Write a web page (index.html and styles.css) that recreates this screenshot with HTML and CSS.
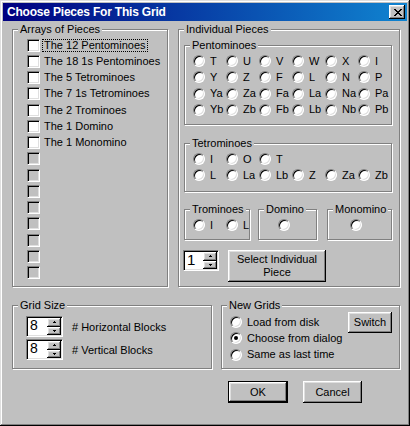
FILE: index.html
```html
<!DOCTYPE html>
<html lang="en">
<head>
  <meta charset="UTF-8" />
  <title>Choose Pieces For This Grid</title>
  <link rel="stylesheet" href="styles.css">
</head>
<body>
  <div class="window">
    <div class="titlebar">
      <span class="title">Choose Pieces For This Grid</span>
      <button class="close-btn" aria-label="Close">
        <svg width="8" height="7" viewBox="0 0 8 7" shape-rendering="crispEdges">
          <path fill="#000" d="M0 0h2v1h-2z M6 0h2v1h-2z M1 1h2v1h-2z M5 1h2v1h-2z M2 2h4v1h-4z M3 3h2v1h-2z M2 4h4v1h-4z M1 5h2v1h-2z M5 5h2v1h-2z M0 6h2v1h-2z M6 6h2v1h-2z"/>
        </svg>
      </button>
    </div>

    <div class="main">
      <div class="top-row">
        <div class="group arrays">
          <span class="group-title">Arrays of Pieces</span>
          <div class="check-row"><span class="checkbox"></span><span class="check-label focus">The 12 Pentominoes</span></div>
          <div class="check-row"><span class="checkbox"></span><span class="check-label">The 18 1s Pentominoes</span></div>
          <div class="check-row"><span class="checkbox"></span><span class="check-label">The 5 Tetrominoes</span></div>
          <div class="check-row"><span class="checkbox"></span><span class="check-label">The 7 1s Tetrominoes</span></div>
          <div class="check-row"><span class="checkbox"></span><span class="check-label">The 2 Trominoes</span></div>
          <div class="check-row"><span class="checkbox"></span><span class="check-label">The 1 Domino</span></div>
          <div class="check-row"><span class="checkbox"></span><span class="check-label">The 1 Monomino</span></div>
          <div class="check-row"><span class="checkbox disabled"></span></div>
          <div class="check-row"><span class="checkbox disabled"></span></div>
          <div class="check-row"><span class="checkbox disabled"></span></div>
          <div class="check-row"><span class="checkbox disabled"></span></div>
          <div class="check-row"><span class="checkbox disabled"></span></div>
          <div class="check-row"><span class="checkbox disabled"></span></div>
          <div class="check-row"><span class="checkbox disabled"></span></div>
          <div class="check-row"><span class="checkbox disabled"></span></div>
        </div>

        <div class="group pieces">
          <span class="group-title">Individual Pieces</span>

          <div class="group pentominoes">
            <span class="group-title">Pentominoes</span>
            <div class="radio-grid">
              <label class="radio-item"><span class="radio"></span>T</label>
              <label class="radio-item"><span class="radio"></span>U</label>
              <label class="radio-item"><span class="radio"></span>V</label>
              <label class="radio-item"><span class="radio"></span>W</label>
              <label class="radio-item"><span class="radio"></span>X</label>
              <label class="radio-item"><span class="radio"></span>I</label>
              <label class="radio-item"><span class="radio"></span>Y</label>
              <label class="radio-item"><span class="radio"></span>Z</label>
              <label class="radio-item"><span class="radio"></span>F</label>
              <label class="radio-item"><span class="radio"></span>L</label>
              <label class="radio-item"><span class="radio"></span>N</label>
              <label class="radio-item"><span class="radio"></span>P</label>
              <label class="radio-item"><span class="radio"></span>Ya</label>
              <label class="radio-item"><span class="radio"></span>Za</label>
              <label class="radio-item"><span class="radio"></span>Fa</label>
              <label class="radio-item"><span class="radio"></span>La</label>
              <label class="radio-item"><span class="radio"></span>Na</label>
              <label class="radio-item"><span class="radio"></span>Pa</label>
              <label class="radio-item"><span class="radio"></span>Yb</label>
              <label class="radio-item"><span class="radio"></span>Zb</label>
              <label class="radio-item"><span class="radio"></span>Fb</label>
              <label class="radio-item"><span class="radio"></span>Lb</label>
              <label class="radio-item"><span class="radio"></span>Nb</label>
              <label class="radio-item"><span class="radio"></span>Pb</label>
            </div>
          </div>

          <div class="group tetrominoes">
            <span class="group-title">Tetrominoes</span>
            <div class="radio-grid">
              <label class="radio-item"><span class="radio"></span>I</label>
              <label class="radio-item"><span class="radio"></span>O</label>
              <label class="radio-item"><span class="radio"></span>T</label>
              <span></span><span></span><span></span>
              <label class="radio-item"><span class="radio"></span>L</label>
              <label class="radio-item"><span class="radio"></span>La</label>
              <label class="radio-item"><span class="radio"></span>Lb</label>
              <label class="radio-item"><span class="radio"></span>Z</label>
              <label class="radio-item"><span class="radio"></span>Za</label>
              <label class="radio-item"><span class="radio"></span>Zb</label>
            </div>
          </div>

          <div class="small-groups">
            <div class="group trominoes">
              <span class="group-title">Trominoes</span>
              <div class="radio-grid">
                <label class="radio-item"><span class="radio"></span>I</label>
                <label class="radio-item"><span class="radio"></span>L</label>
              </div>
            </div>
            <div class="group domino">
              <span class="group-title">Domino</span>
              <div class="radio-grid"><span class="radio-item"><span class="radio"></span></span></div>
            </div>
            <div class="group monomino">
              <span class="group-title">Monomino</span>
              <div class="radio-grid"><span class="radio-item"><span class="radio"></span></span></div>
            </div>
          </div>

          <div class="piece-controls">
            <div class="spin spin-small">
              <span class="spin-value">1</span>
              <span class="spin-btns">
                <span class="spin-btn"><svg width="3" height="2" viewBox="0 0 3 2" shape-rendering="crispEdges"><path d="M1 0h1v1h1v1h-3v-1h1z"/></svg></span>
                <span class="spin-btn"><svg width="3" height="2" viewBox="0 0 3 2" shape-rendering="crispEdges"><path d="M0 0h3v1h-1v1h-1v-1h-1z"/></svg></span>
              </span>
            </div>
            <button class="btn select-btn">Select Individual<br>Piece</button>
          </div>
        </div>
      </div>

      <div class="bottom-row">
        <div class="group grid-size">
          <span class="group-title">Grid Size</span>
          <div class="spin-row">
            <div class="spin">
              <span class="spin-value">8</span>
              <span class="spin-btns">
                <span class="spin-btn"><svg width="3" height="2" viewBox="0 0 3 2" shape-rendering="crispEdges"><path d="M1 0h1v1h1v1h-3v-1h1z"/></svg></span>
                <span class="spin-btn"><svg width="3" height="2" viewBox="0 0 3 2" shape-rendering="crispEdges"><path d="M0 0h3v1h-1v1h-1v-1h-1z"/></svg></span>
              </span>
            </div>
            <span># Horizontal Blocks</span>
          </div>
          <div class="spin-row">
            <div class="spin">
              <span class="spin-value">8</span>
              <span class="spin-btns">
                <span class="spin-btn"><svg width="3" height="2" viewBox="0 0 3 2" shape-rendering="crispEdges"><path d="M1 0h1v1h1v1h-3v-1h1z"/></svg></span>
                <span class="spin-btn"><svg width="3" height="2" viewBox="0 0 3 2" shape-rendering="crispEdges"><path d="M0 0h3v1h-1v1h-1v-1h-1z"/></svg></span>
              </span>
            </div>
            <span># Vertical Blocks</span>
          </div>
        </div>

        <div class="right-col">
          <div class="group new-grids">
            <span class="group-title">New Grids</span>
            <div class="radio-list">
              <label class="radio-item"><span class="radio"></span>Load from disk</label>
              <label class="radio-item"><span class="radio checked"></span>Choose from dialog</label>
              <label class="radio-item"><span class="radio"></span>Same as last time</label>
            </div>
            <button class="btn switch-btn">Switch</button>
          </div>
          <div class="actions">
            <button class="btn default ok-btn">OK</button>
            <button class="btn cancel-btn">Cancel</button>
          </div>
        </div>
      </div>
    </div>
  </div>
</body>
</html>
```

FILE: styles.css
```css
* {
  box-sizing: border-box;
}
body {
  margin: 0;
  background: #c0c0c0;
  font-family: "Liberation Sans", Arial, sans-serif;
  font-size: 11px;
  color: #000;
}
.window {
  width: 410px;
  height: 426px;
  padding: 3px;
  background: #c0c0c0;
  box-shadow: inset -1px -1px #000, inset 1px 1px #dfdfdf, inset -2px -2px #808080, inset 2px 2px #fff;
}
.titlebar {
  height: 18px;
  display: flex;
  align-items: center;
  justify-content: space-between;
  padding: 0 2px 0 4px;
  background: linear-gradient(to right, #000080, #1084d0);
}
.title {
  color: #fff;
  font-weight: bold;
  font-size: 12px;
  letter-spacing: -0.2px;
}
.close-btn {
  width: 16px;
  height: 14px;
  padding: 0 0 0 1px;
  border: 0;
  background: #c0c0c0;
  box-shadow: inset -1px -1px #000, inset 1px 1px #fff, inset -2px -2px #808080, inset 2px 2px #dfdfdf;
  display: flex;
  align-items: center;
  justify-content: center;
}

.main {
  padding: 8px 7px 0 9px;
}
.top-row {
  display: flex;
  gap: 10px;
  height: 258px;
}

/* etched group box */
.group {
  position: relative;
  border: 1px solid #808080;
  box-shadow: inset 1px 1px #fff, 1px 1px #fff;
}
.group-title {
  position: absolute;
  top: -7px;
  left: 5px;
  padding: 0 2px;
  line-height: 13px;
  background: #c0c0c0;
  white-space: nowrap;
}

.arrays {
  width: 156px;
  padding: 7px 0 0 14px;
}
.check-row {
  display: flex;
  align-items: center;
  height: 16.25px;
}
.checkbox {
  flex: none;
  width: 13px;
  height: 13px;
  margin-right: 2px;
  background: #fff;
  border: 1px solid;
  border-color: #808080 #fff #fff #808080;
  box-shadow: inset 1px 1px #000, inset -1px -1px #dfdfdf;
}
.checkbox.disabled {
  background: #c0c0c0;
}
.check-label {
  padding: 0 2px;
  line-height: 13px;
  white-space: nowrap;
}
.check-label.focus {
  outline: 1px dotted #000;
  outline-offset: -1px;
}

.pieces {
  width: 222px;
  padding: 15px 7px 0 5px;
}
.pentominoes {
  height: 80px;
  padding: 7px 0 0 8px;
}
.tetrominoes {
  height: 49px;
  margin-top: 18px;
  padding: 7px 0 0 8px;
}
.radio-grid {
  display: grid;
  grid-template-columns: repeat(6, 33px);
  grid-auto-rows: 16.25px;
}
.radio-item {
  display: flex;
  align-items: center;
  gap: 5px;
  line-height: 13px;
  white-space: nowrap;
}
.radio {
  flex: none;
  width: 12px;
  height: 12px;
  border-radius: 50%;
  background: #fff;
  border: 1px solid;
  border-color: #808080 #fff #fff #808080;
  box-shadow: inset 1px 1px #000, inset -1px -1px #dfdfdf;
}
.radio.checked::after {
  content: "";
  display: block;
  width: 4px;
  height: 4px;
  margin: 3px;
  border-radius: 50%;
  background: #000;
}

.small-groups {
  display: flex;
  margin-top: 17px;
}
.trominoes,
.domino,
.monomino {
  height: 31px;
  padding-top: 7px;
}
.trominoes {
  width: 66px;
  padding-left: 8px;
}
.domino {
  width: 59px;
  margin-left: 8px;
  padding-left: 19px;
}
.monomino {
  width: 65px;
  margin-left: 10px;
  padding-left: 22px;
}

.piece-controls {
  display: flex;
  align-items: flex-start;
  gap: 9px;
  margin: 10px 0 0 -1px;
}

/* edit box with up/down buttons */
.spin {
  display: flex;
  width: 37px;
  height: 21px;
  padding: 2px;
  background: #fff;
  border: 1px solid;
  border-color: #808080 #fff #fff #808080;
  box-shadow: inset 1px 1px #000, inset -1px -1px #dfdfdf;
}
.spin-small {
  width: 36px;
}
.spin-value {
  flex: 1;
  padding-left: 1px;
  font-size: 14px;
  line-height: 13px;
}
.spin-small .spin-value {
  font-size: 15px;
}
.spin-btns {
  display: flex;
  flex-direction: column;
  width: 14px;
  margin: -1px -1px -1px 0;
}
.spin-btn {
  flex: 1;
  display: flex;
  align-items: center;
  justify-content: center;
  background: #c0c0c0;
  box-shadow: inset -1px -1px #000, inset 1px 1px #fff, inset -2px -2px #808080, inset 2px 2px #dfdfdf;
}

.btn {
  font: inherit;
  line-height: 13px;
  color: #000;
  padding: 0;
  border: 0;
  background: #c0c0c0;
  box-shadow: inset -1px -1px #000, inset 1px 1px #fff, inset -2px -2px #808080, inset 2px 2px #dfdfdf;
}
.btn.default {
  box-shadow: inset 0 0 0 1px #000, inset -2px -2px #000, inset 2px 2px #fff, inset -3px -3px #808080, inset 3px 3px #dfdfdf;
}
.select-btn {
  width: 98px;
  height: 32px;
}

.bottom-row {
  display: flex;
  gap: 9px;
  margin-top: 18px;
}
.grid-size {
  width: 200px;
  height: 64px;
  padding: 10px 0 0 13px;
}
.spin-row {
  display: flex;
  align-items: center;
  gap: 9px;
}
.spin-row + .spin-row {
  margin-top: 2px;
}

.right-col {
  width: 179px;
}
.new-grids {
  display: flex;
  align-items: flex-start;
  height: 64px;
  padding: 8px 7px 0 8px;
}
.radio-list .radio-item {
  height: 16.25px;
}
.switch-btn {
  width: 44px;
  height: 21px;
  margin: -2px 0 0 auto;
}
.actions {
  display: flex;
  gap: 15px;
  margin-top: 12px;
  padding-left: 7px;
}
.ok-btn {
  width: 60px;
  height: 22px;
}
.cancel-btn {
  width: 59px;
  height: 22px;
}
```
